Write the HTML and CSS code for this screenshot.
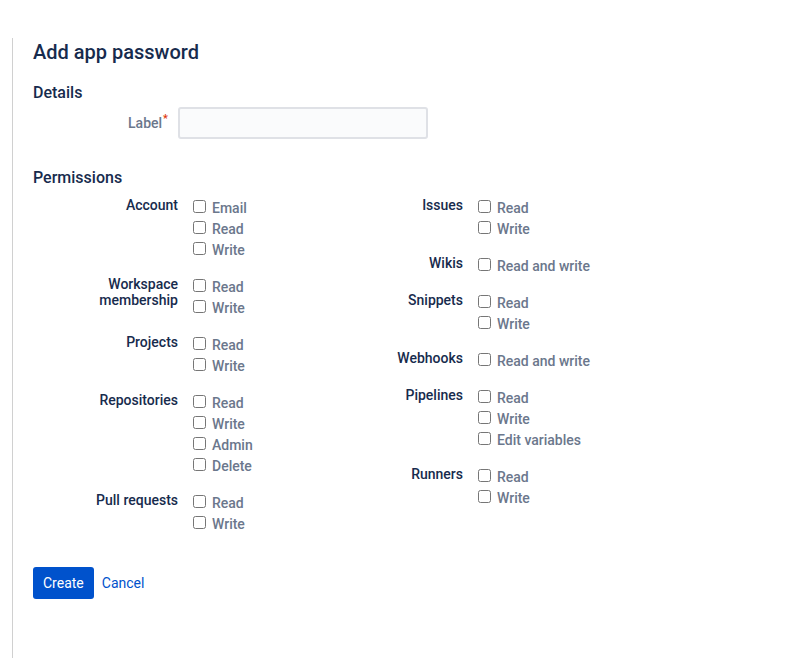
FILE: index.html
```html
<!DOCTYPE html>
<html lang="en">
<head>
<meta charset="utf-8">
<title>Add app password</title>
<link rel="stylesheet" href="styles.css">
</head>
<body>
<div class="page">
  <h1 class="title">Add app password</h1>
  <h2 class="section">Details</h2>
  <div class="field-row">
    <label class="field-label" for="label">Label<span class="req">*</span></label>
    <input class="text-input" id="label" type="text">
  </div>
  <h2 class="section perm-head">Permissions</h2>
  <div class="perm-grid">
    <div class="perm-col">
      <div class="group">
        <div class="group-label">Account</div>
        <div class="options">
          <label class="opt"><input type="checkbox"><span>Email</span></label>
          <label class="opt"><input type="checkbox"><span>Read</span></label>
          <label class="opt"><input type="checkbox"><span>Write</span></label>
        </div>
      </div>
      <div class="group">
        <div class="group-label">Workspace membership</div>
        <div class="options">
          <label class="opt"><input type="checkbox"><span>Read</span></label>
          <label class="opt"><input type="checkbox"><span>Write</span></label>
        </div>
      </div>
      <div class="group">
        <div class="group-label">Projects</div>
        <div class="options">
          <label class="opt"><input type="checkbox"><span>Read</span></label>
          <label class="opt"><input type="checkbox"><span>Write</span></label>
        </div>
      </div>
      <div class="group">
        <div class="group-label">Repositories</div>
        <div class="options">
          <label class="opt"><input type="checkbox"><span>Read</span></label>
          <label class="opt"><input type="checkbox"><span>Write</span></label>
          <label class="opt"><input type="checkbox"><span>Admin</span></label>
          <label class="opt"><input type="checkbox"><span>Delete</span></label>
        </div>
      </div>
      <div class="group">
        <div class="group-label">Pull requests</div>
        <div class="options">
          <label class="opt"><input type="checkbox"><span>Read</span></label>
          <label class="opt"><input type="checkbox"><span>Write</span></label>
        </div>
      </div>
    </div>
    <div class="perm-col">
      <div class="group">
        <div class="group-label">Issues</div>
        <div class="options">
          <label class="opt"><input type="checkbox"><span>Read</span></label>
          <label class="opt"><input type="checkbox"><span>Write</span></label>
        </div>
      </div>
      <div class="group">
        <div class="group-label">Wikis</div>
        <div class="options">
          <label class="opt"><input type="checkbox"><span>Read and write</span></label>
        </div>
      </div>
      <div class="group">
        <div class="group-label">Snippets</div>
        <div class="options">
          <label class="opt"><input type="checkbox"><span>Read</span></label>
          <label class="opt"><input type="checkbox"><span>Write</span></label>
        </div>
      </div>
      <div class="group">
        <div class="group-label">Webhooks</div>
        <div class="options">
          <label class="opt"><input type="checkbox"><span>Read and write</span></label>
        </div>
      </div>
      <div class="group">
        <div class="group-label">Pipelines</div>
        <div class="options">
          <label class="opt"><input type="checkbox"><span>Read</span></label>
          <label class="opt"><input type="checkbox"><span>Write</span></label>
          <label class="opt"><input type="checkbox"><span>Edit variables</span></label>
        </div>
      </div>
      <div class="group">
        <div class="group-label">Runners</div>
        <div class="options">
          <label class="opt"><input type="checkbox"><span>Read</span></label>
          <label class="opt"><input type="checkbox"><span>Write</span></label>
        </div>
      </div>
    </div>
  </div>
  <div class="actions">
    <button class="btn-primary" type="button">Create</button>
    <a class="btn-link" href="#">Cancel</a>
  </div>
</div>
</body>
</html>
```
FILE: styles.css
```css
html, body {
  margin: 0;
  padding: 0;
  background: #ffffff;
}
body {
  font-family: "Segoe UI", Roboto, "Noto Sans", sans-serif;
  font-size: 14px;
  color: #172b4d;
}
.page {
  margin-top: 38px;
  margin-left: 12px;
  min-height: 620px;
  border-left: 1px solid #d0d0d0;
  padding-left: 20px;
  padding-top: 2px;
}
.title {
  margin: 0;
  font-size: 20px;
  line-height: 24px;
  font-weight: 500;
  color: #172b4d;
}
.section {
  margin: 19px 0 0;
  font-size: 16px;
  line-height: 20px;
  font-weight: 500;
  color: #172b4d;
}
.field-row {
  display: flex;
  align-items: center;
  margin-top: 4px;
}
.field-label {
  width: 135px;
  text-align: right;
  padding-right: 10px;
  color: #6b778c;
  font-size: 14px;
  font-weight: 500;
}
.req {
  color: #de350b;
  font-size: 11px;
  vertical-align: top;
  position: relative;
  top: -3px;
  margin-left: 1px;
}
.text-input {
  box-sizing: border-box;
  width: 250px;
  height: 32px;
  margin: 0;
  border: 2px solid #dfe1e6;
  border-radius: 3px;
  background: #fafbfc;
  font: inherit;
  padding: 4px 6px;
}
.perm-head {
  margin-top: 29px;
}
.perm-grid {
  display: grid;
  grid-template-columns: 285px 285px;
  align-items: start;
  margin-top: 9px;
}
.group {
  display: flex;
  align-items: flex-start;
  margin-bottom: 16px;
}
.group-label {
  width: 145px;
  flex: none;
  text-align: right;
  line-height: 16px;
  font-weight: 500;
  color: #172b4d;
}
.options {
  display: flex;
  flex-direction: column;
  margin-left: 15px;
}
.opt {
  display: flex;
  align-items: center;
  height: 21px;
  line-height: 21px;
  color: #6b778c;
  font-weight: 500;
}
.opt input {
  margin: 0 6px 0 0;
  width: 13px;
  height: 13px;
  position: relative;
  top: -1px;
}
.opt span {
  position: relative;
  top: 1px;
}
.actions {
  display: flex;
  align-items: center;
  margin-top: 17px;
  gap: 8px;
}
.btn-primary {
  height: 32px;
  padding: 0 10px;
  border: none;
  border-radius: 3px;
  background: #0052cc;
  color: #ffffff;
  font: inherit;
  font-size: 14px;
  font-weight: 400;
}
.btn-link {
  color: #0052cc;
  text-decoration: none;
}
```
